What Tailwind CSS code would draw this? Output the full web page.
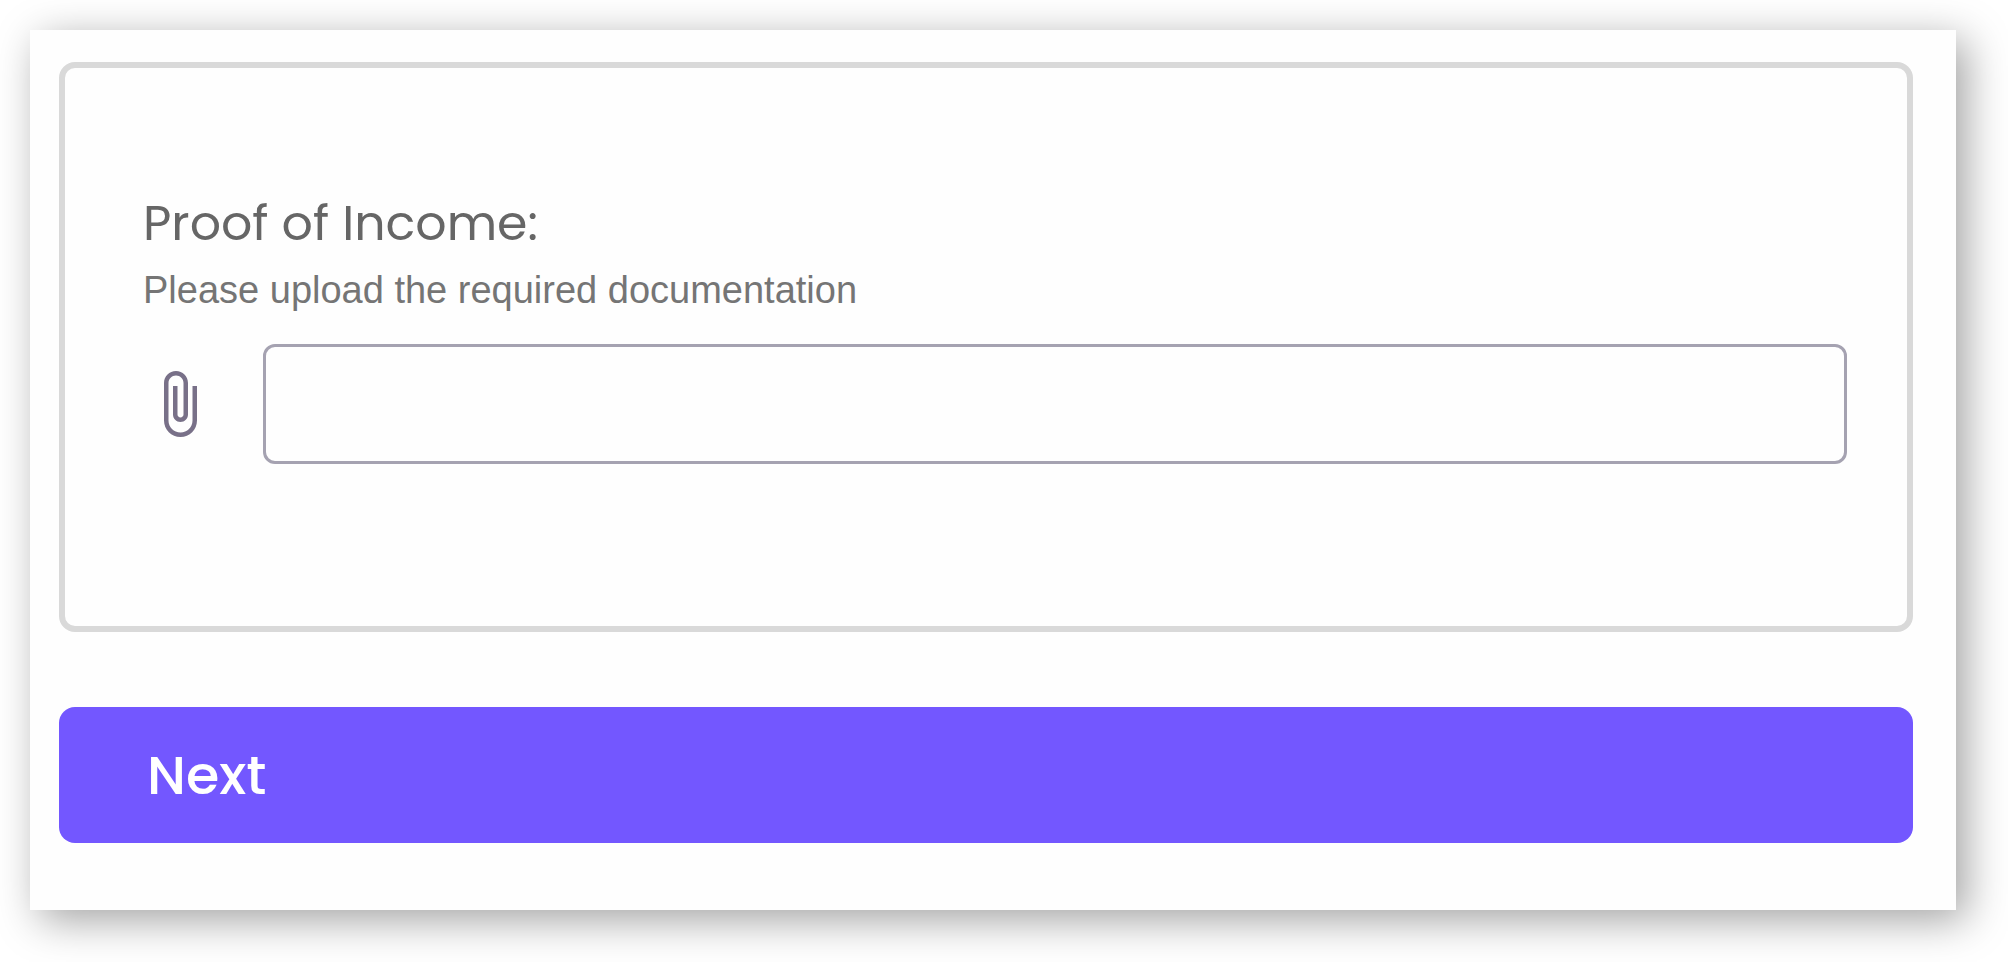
<!DOCTYPE html>
<html lang="en">
<head>
    <meta charset="UTF-8">
    <title>Proof of Income</title>
    <meta name="viewport" content="width=device-width, initial-scale=1.0">
    <script src="https://cdn.jsdelivr.net/npm/@tailwindcss/browser@4"></script>
</head>
<body class="bg-white">
    <!-- Card -->
    <main class="mt-[30px] ml-[30px] mr-[52px] mb-[52px] pt-8 pl-[29px] pr-[43px] pb-[67px] bg-[#fefefe] shadow-[10px_10px_40px_rgba(0,0,0,0.37)]">
        <form>
            <!-- Upload -->
            <section class="border-6 border-[#d9d9d9] rounded-2xl pt-[123px] pb-[162px] pl-[78px] pr-[60px]">
                <label for="proof" class="block font-['Poppins','Inter',sans-serif] text-[49px] leading-[64px] text-[#666666]">Proof of Income:</label>
                <p id="proofHint" class="mt-[11px] font-['Liberation_Sans',Arial,sans-serif] text-[38px] leading-[48px] text-[#757575]">Please upload the required documentation</p>
                <div class="mt-[30px] flex items-center gap-12">
                    <button type="button" aria-label="Attach file" class="shrink-0 text-[#787088]">
                        <svg class="w-18 h-18" viewBox="0 0 24 24" fill="currentColor" aria-hidden="true">
                            <path d="M16.5 6v11.5c0 2.21-1.79 4-4 4s-4-1.79-4-4V5c0-1.38 1.12-2.5 2.5-2.5s2.5 1.12 2.5 2.5v10.5c0 .55-.45 1-1 1s-1-.45-1-1V6H10v9.5c0 1.38 1.12 2.5 2.5 2.5s2.5-1.12 2.5-2.5V5c0-2.21-1.79-4-4-4S7 2.79 7 5v12.5c0 3.04 2.46 5.5 5.5 5.5s5.5-2.46 5.5-5.5V6h-1.5z"/>
                        </svg>
                    </button>
                    <input id="proof" type="text" aria-describedby="proofHint" class="min-w-0 flex-1 h-[120px] px-6 text-4xl border-3 border-[#a5a2b1] rounded-xl bg-transparent">
                </div>
            </section>

            <button type="submit" class="mt-[75px] block w-full h-[136px] pl-[88px] rounded-2xl bg-[#7357ff] text-left text-white font-['Poppins','Inter',sans-serif] font-medium text-[54px] leading-[64px]">Next</button>
        </form>
    </main>
</body>
</html>
